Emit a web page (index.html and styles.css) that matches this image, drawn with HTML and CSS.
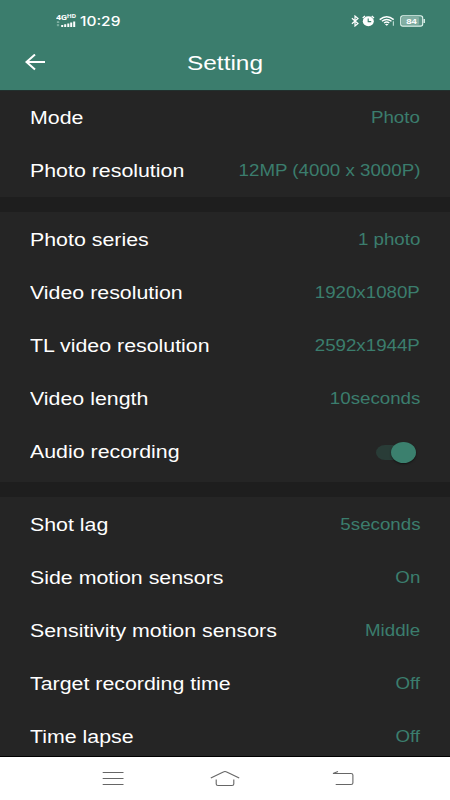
FILE: index.html
```
<!DOCTYPE html>
<html lang="en">
	<head>
		<meta charset="UTF-8">
		<title>Setting</title>
		<link rel="stylesheet" href="styles.css">
	</head>
	<body>
		<div class="phone">
			<div class="header">
				<div class="status">
					<div class="signal">
						<div class="net">4G<sup>HD</sup></div>
						<svg class="bars" width="20" height="6" viewBox="0 0 20 6">
							<path d="M2 0v2M.8 1.2h2.6M2 3.3v2M.8 4h2.4" stroke="#9bc4b8" stroke-width=".8"/>
							<path d="M5.2 4h2v2h-2zM8.2 3.3h2V6h-2zM11.3 2.4h2V6h-2zM14.2 1.5h2V6h-2zM17.2.5h2V6h-2z" fill="#fff"/>
						</svg>
					</div>
					<span class="clock">10:29</span>
					<svg class="icons" width="74" height="12" viewBox="0 0 74 12">
						<!-- bluetooth -->
						<path d="M.9 3.2L7 8.5 4 11V1l3 2.5L.9 8.8" fill="none" stroke="#fff" stroke-width="1.2"/>
						<!-- alarm -->
						<ellipse cx="17.3" cy="6.3" rx="5.5" ry="5" fill="#fff"/>
						<path d="M11.7 3L14 1M20.7 1L23 3" stroke="#fff" stroke-width="1.3"/>
						<path d="M17.2 3.6v3h3" fill="none" stroke="#3b7d6d" stroke-width="1.1"/>
						<!-- wifi -->
						<path d="M28.7 4.6Q35.7 -1.2 42.7 4.6M30.9 6.3Q35.7 2.7 40.5 6.3M33 8Q35.7 6 38.3 8" fill="none" stroke="#fff" stroke-width="1.4"/>
						<path d="M33.9 9.2q1.8-1.1 3.6 0l-1.8 1.6z" fill="#fff"/>
						<path d="M42.4 6.3v4.5" stroke="#b5d6cd" stroke-width="1.2"/>
						<!-- battery -->
						<rect x="49.7" y=".7" width="22" height="10.4" rx="2.2" fill="#5b9486" stroke="#e4f5f0" stroke-width="1.1"/>
						<rect x="51" y="2" width="17" height="7.8" rx=".8" fill="#83afa4"/>
						<path d="M73.2 4v4" stroke="#e4f5f0" stroke-width="1.4"/>
						<text class="level" x="60.6" y="8.7" text-anchor="middle" textLength="10.5" lengthAdjust="spacingAndGlyphs">84</text>
					</svg>
				</div>
				<div class="title-bar">
					<svg class="back" width="22" height="18" viewBox="0 0 22 18">
						<path d="M11 .5L2.5 8 11 15.5M2.5 8H21" fill="none" stroke="#fff" stroke-width="2"/>
					</svg>
					<span class="title">Setting</span>
				</div>
			</div>

			<div class="list">
				<div class="group">
					<div class="item"><span class="name">Mode</span><span class="value">Photo</span></div>
					<div class="item"><span class="name">Photo resolution</span><span class="value">12MP (4000 x 3000P)</span></div>
				</div>
				<div class="group">
					<div class="item"><span class="name">Photo series</span><span class="value">1 photo</span></div>
					<div class="item"><span class="name">Video resolution</span><span class="value">1920x1080P</span></div>
					<div class="item"><span class="name">TL video resolution</span><span class="value">2592x1944P</span></div>
					<div class="item"><span class="name">Video length</span><span class="value">10seconds</span></div>
					<div class="item"><span class="name">Audio recording</span><span class="switch"><i class="thumb"></i></span></div>
				</div>
				<div class="group">
					<div class="item"><span class="name">Shot lag</span><span class="value">5seconds</span></div>
					<div class="item"><span class="name">Side motion sensors</span><span class="value">On</span></div>
					<div class="item"><span class="name">Sensitivity motion sensors</span><span class="value">Middle</span></div>
					<div class="item"><span class="name">Target recording time</span><span class="value">Off</span></div>
					<div class="item"><span class="name">Time lapse</span><span class="value">Off</span></div>
				</div>
			</div>

			<div class="nav">
				<svg width="22" height="16" viewBox="0 0 22 16">
					<path d="M.7 1.5H21.5M.7 7.5H21.5M.7 13.5H21.5" stroke="#666" stroke-width="1"/>
				</svg>
				<svg width="30" height="16" viewBox="0 0 30 16">
					<path d="M.8 7L13.3 .9q1.7-.7 3.4 0L29.2 7M6.2 8.4v4.5q0 1.6 1.8 1.6h14q1.8 0 1.8-1.6V8.4" fill="none" stroke="#666" stroke-width="1.1"/>
				</svg>
				<svg width="22" height="16" viewBox="0 0 22 16">
					<path d="M6 .5L1 2.5h18q1.9 0 1.9 1.6v8q0 1.4-1.9 1.4H3.7" fill="none" stroke="#666" stroke-width="1.1"/>
				</svg>
			</div>
		</div>
	</body>
</html>
```
FILE: styles.css
```
*{
	box-sizing: border-box;
	margin: 0;
	padding: 0;
}
body{
	font-family: "Liberation Sans", Arial, sans-serif;
	background: #1e1e1e;
}
svg{
	display: block;
	flex: none;
}
.phone{
	width: 450px;
	height: 800px;
	overflow: hidden;
	display: flex;
	flex-direction: column;
}

/* header */
.header{
	height: 91px;
	flex: none;
	background: #3b7d6d;
	border-bottom: 1px solid #22302e;
	color: #fff;
}
.status{
	height: 36px;
	padding: 5px 25px 0 56px;
	display: flex;
	align-items: center;
}
.signal{
	width: 21px;
}
.net{
	height: 6px;
	line-height: 6px;
	font-family: Roboto, sans-serif;
	font-size: 7.5px;
	font-weight: bold;
	white-space: nowrap;
	transform: scaleX(1.18);
	transform-origin: left;
}
.net sup{
	font-size: 5.5px;
	line-height: 0;
	vertical-align: 2px;
}
.clock{
	margin-left: 3px;
	font-family: Inter, Roboto, sans-serif;
	font-size: 13px;
	line-height: 14px;
	font-weight: 500;
	transform: scaleX(1.19);
	transform-origin: left;
}
.icons{
	margin-left: auto;
}
.level{
	font-size: 7.5px;
	font-weight: bold;
	fill: #fff;
}
.title-bar{
	height: 54px;
	padding: 0 24px;
	display: grid;
	grid-template-columns: 22px 1fr 22px;
	align-items: center;
}
.title{
	font-size: 20px;
	text-align: center;
	transform: scaleX(1.22);
}

/* settings */
.list{
	flex: 1;
	min-height: 0;
	overflow: hidden;
	border-bottom: 1px solid #000;
}
.group{
	background: #252525;
	margin-bottom: 15px;
}
.group:nth-child(2){
	padding: 1px 0 4px;
}
.group:nth-child(3){
	padding-top: 1px;
}
.item{
	height: 53px;
	padding: 0 30px;
	display: flex;
	align-items: center;
	justify-content: space-between;
	white-space: nowrap;
}
/* wide lettering */
.name{
	padding-top: 2px;
	font-size: 17.5px;
	color: #fff;
	transform: scaleX(1.22);
	transform-origin: left;
}
.value{
	font-size: 16px;
	line-height: 18px;
	color: #3b7d6d;
	transform: scaleX(1.17);
	transform-origin: right;
}
.switch{
	width: 34px;
	height: 15px;
	margin-right: 10px;
	margin-top: 1px;
	display: flex;
	align-items: center;
	border-radius: 9px / 7.5px;
	background: #293c37;
}
.thumb{
	flex: none;
	width: 25px;
	height: 21px;
	margin-left: 15px;
	border-radius: 50%;
	background: #3b806e;
	box-shadow: 0 1px 2px rgba(0,0,0,.5);
}

/* bottom keys */
.nav{
	height: 43px;
	flex: none;
	padding: 0 96px 0 102px;
	display: flex;
	align-items: center;
	justify-content: space-between;
	background: #fff;
}
.nav svg:nth-child(2){
	margin-right: 6px;
}
```
